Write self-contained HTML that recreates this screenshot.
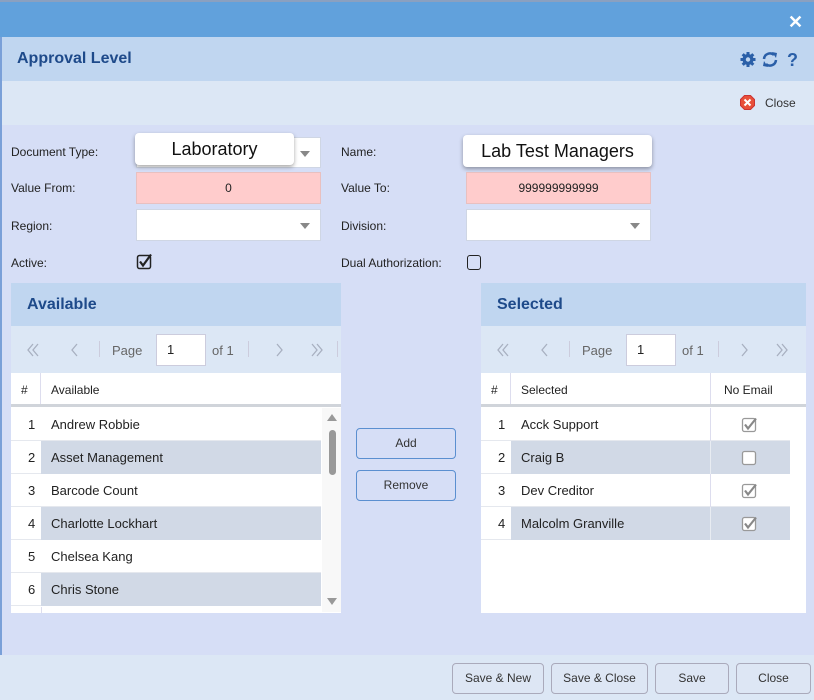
<!DOCTYPE html>
<html><head><style>
*{box-sizing:border-box;margin:0;padding:0}
body{width:814px;height:700px;position:relative;overflow:hidden;font-family:"Liberation Sans",sans-serif;font-size:13px;color:#222;background:#d6def6}
.a{position:absolute}
.lbl{position:absolute;font-size:12px;color:#222}
.inp{position:absolute;background:#fff;border:1px solid #cfd6e4}
.pink{background:#fcc;border:1px solid #e8c0c0;text-align:center;font-size:12px;line-height:30px;color:#222}
.tri{position:absolute;right:10px;top:13px;width:0;height:0;border-left:5px solid transparent;border-right:5px solid transparent;border-top:6px solid #888}
.ph{position:absolute;height:43px;background:#c0d6f0;color:#1e4a8a;font-weight:bold;font-size:16px;line-height:43px;padding-left:16px}
.pg{position:absolute;height:47px;background:#dce7f5;color:#999;font-size:13px}
.row{position:absolute;height:33px;border-bottom:1px solid #e5e8ee;font-size:13px;line-height:33px}
.btn{position:absolute;height:31px;border:1px solid #aab;border-radius:4px;background:#dde6f4;text-align:center;line-height:29px;font-size:12px;color:#333}
.bb{position:absolute;border:1px solid #5b8fd0;border-radius:4px;background:#d6def6;text-align:center;font-size:12px;line-height:29px;width:100px;height:31px;color:#333}
</style></head><body>
<div class="a" style="left:0;top:0;width:814px;height:2px;background:#8aa0c0"></div>
<div class="a" style="left:0;top:2px;width:814px;height:35px;background:#61a1dc"></div>
<div class="a" style="left:788px;top:12px;color:#fff;font-weight:bold;font-size:18px">✕</div>
<div class="a" style="left:0;top:37px;width:814px;height:44px;background:#c0d6f0"></div>
<div class="a" style="left:17px;top:50px;font-size:16px;font-weight:bold;color:#1e4a8a">Approval Level</div>
<svg class="a" style="left:740px;top:51px" width="60" height="17" viewBox="0 0 60 17">
<g fill="#2a5fa8"><circle cx="8" cy="8.5" r="5.5"/><rect x="6.5" y="1" width="3" height="15"/><rect x="0.5" y="7" width="15" height="3"/><rect x="6.5" y="1" width="3" height="15" transform="rotate(45 8 8.5)"/><rect x="6.5" y="1" width="3" height="15" transform="rotate(-45 8 8.5)"/></g>
<circle cx="8" cy="8.5" r="2.2" fill="#c0d6f0"/>
<path d="M24 8a6 6 0 0 1 10-4M36 9a6 6 0 0 1-10 4" stroke="#2a5fa8" stroke-width="2.5" fill="none"/>
<path d="M32 1l5 1-1 5zM28 16l-5-1 1-5z" fill="#2a5fa8"/>
<text x="47" y="15" font-family="Liberation Sans" font-weight="bold" font-size="18" fill="#2a5fa8">?</text>
</svg>
<div class="a" style="left:0;top:81px;width:814px;height:44px;background:#dce7f5"></div>
<svg class="a" style="left:740px;top:95px" width="15" height="15" viewBox="0 0 15 15"><path d="M4.5 0.5h6l4 4v6l-4 4h-6l-4-4v-6z" fill="#e8503a" stroke="#c33" stroke-width="1"/><path d="M4.5 4.5l6 6M10.5 4.5l-6 6" stroke="#fff" stroke-width="2"/></svg>
<div class="a" style="left:765px;top:96px;font-size:12px;color:#333">Close</div>
<div class="a" style="left:0;top:37px;width:2px;height:618px;background:#7aa0d8"></div>

<div class="lbl" style="left:11px;top:145px">Document Type:</div>
<div class="inp" style="left:136px;top:137px;width:185px;height:31px"><div class="tri"></div></div>
<div class="a" style="left:135px;top:133px;width:159px;height:32px;background:#fff;border-radius:4px;box-shadow:0 2px 4px rgba(0,0,0,.35);font-size:18px;text-align:center;line-height:32px;color:#111">Laboratory</div>
<div class="lbl" style="left:341px;top:145px">Name:</div>
<div class="a" style="left:463px;top:135px;width:189px;height:32px;background:#fff;border-radius:4px;box-shadow:0 2px 4px rgba(0,0,0,.35);font-size:18px;text-align:center;line-height:32px;color:#111">Lab Test Managers</div>
<div class="lbl" style="left:11px;top:181px">Value From:</div>
<div class="inp pink" style="left:136px;top:172px;width:185px;height:32px">0</div>
<div class="lbl" style="left:341px;top:181px">Value To:</div>
<div class="inp pink" style="left:466px;top:172px;width:185px;height:32px">999999999999</div>
<div class="lbl" style="left:11px;top:219px">Region:</div>
<div class="inp" style="left:136px;top:209px;width:185px;height:32px"><div class="tri"></div></div>
<div class="lbl" style="left:341px;top:219px">Division:</div>
<div class="inp" style="left:466px;top:209px;width:185px;height:32px"><div class="tri"></div></div>
<div class="lbl" style="left:11px;top:256px">Active:</div>
<svg class="a" style="left:136px;top:253px" width="18" height="18" viewBox="0 0 18 18"><rect x="1.5" y="2.5" width="13" height="13" rx="2" fill="none" stroke="#222" stroke-width="1.5"/><path d="M4 8.5l3 4 8-11" stroke="#222" stroke-width="2.2" fill="none"/></svg>
<div class="lbl" style="left:341px;top:256px">Dual Authorization:</div>
<div class="a" style="left:467px;top:255px;width:14px;height:15px;border:1.5px solid #222;border-radius:3px"></div>

<!-- Available -->
<div class="a" style="left:11px;top:283px;width:330px;height:330px;background:#fff"></div>
<div class="ph" style="left:11px;top:283px;width:330px">Available</div>
<div class="pg" style="left:11px;top:326px;width:330px">
<svg class="a" style="left:16px;top:17px" width="310" height="14" viewBox="0 0 310 14" fill="none" stroke="#a8b0c0" stroke-width="1.3">
<path d="M6 1l-5 6 5 6M11 1l-5 6 5 6M50 1l-5 6 5 6M250 1l5 6-5 6M285 1l5 6-5 6M290 1l5 6-5 6"/></svg>
<span class="a" style="left:88px;top:15px;width:1px;height:16px;background:#ccd"></span>
<span class="a" style="left:101px;top:17px;color:#666">Page</span>
<span class="a" style="left:145px;top:8px;width:50px;height:32px;background:#fff;border:1px solid #ccd;color:#222;padding-left:10px;line-height:30px">1</span>
<span class="a" style="left:201px;top:17px;color:#666">of 1</span>
<span class="a" style="left:237px;top:15px;width:1px;height:16px;background:#ccd"></span>
<span class="a" style="left:326px;top:15px;width:1px;height:16px;background:#ccd"></span>
</div>
<div class="a" style="left:11px;top:373px;width:330px;height:34px;background:#fff;border-bottom:3px solid #d0d4da;font-size:12px;line-height:34px">
<span class="a" style="left:10px">#</span><span class="a" style="left:29px;width:1px;height:31px;background:#dde"></span><span class="a" style="left:40px">Available</span></div>
<div class="a" style="left:322px;top:408px;width:19px;height:204px;background:#f8f8f8"></div>
<div class="a" style="left:329px;top:430px;width:7px;height:45px;border-radius:4px;background:#999"></div>
<div class="a" style="left:327px;top:414px;border-left:5px solid transparent;border-right:5px solid transparent;border-bottom:7px solid #999"></div>
<div class="a" style="left:327px;top:598px;border-left:5px solid transparent;border-right:5px solid transparent;border-top:7px solid #999"></div>

<div class="row" style="left:11px;top:408px;width:310px"><span class="a" style="left:17px">1</span><span class="a" style="left:40px">Andrew Robbie</span></div>
<div class="row" style="left:11px;top:441px;width:310px"><span class="a" style="left:17px">2</span><span class="a" style="left:30px;width:280px;height:33px;background:#d1d9e6;padding-left:10px">Asset Management</span></div>
<div class="row" style="left:11px;top:474px;width:310px"><span class="a" style="left:17px">3</span><span class="a" style="left:40px">Barcode Count</span></div>
<div class="row" style="left:11px;top:507px;width:310px"><span class="a" style="left:17px">4</span><span class="a" style="left:30px;width:280px;height:33px;background:#d1d9e6;padding-left:10px">Charlotte Lockhart</span></div>
<div class="row" style="left:11px;top:540px;width:310px"><span class="a" style="left:17px">5</span><span class="a" style="left:40px">Chelsea Kang</span></div>
<div class="row" style="left:11px;top:573px;width:310px"><span class="a" style="left:17px">6</span><span class="a" style="left:30px;width:280px;height:33px;background:#d1d9e6;padding-left:10px">Chris Stone</span></div>
<div class="a" style="left:41px;top:607px;width:1px;height:6px;background:#dde"></div>

<div class="bb" style="left:356px;top:428px">Add</div>
<div class="bb" style="left:356px;top:470px">Remove</div>

<!-- Selected -->
<div class="a" style="left:481px;top:283px;width:325px;height:330px;background:#fff"></div>
<div class="ph" style="left:481px;top:283px;width:325px">Selected</div>
<div class="pg" style="left:481px;top:326px;width:325px">
<svg class="a" style="left:16px;top:17px" width="310" height="14" viewBox="0 0 310 14" fill="none" stroke="#a8b0c0" stroke-width="1.3">
<path d="M6 1l-5 6 5 6M11 1l-5 6 5 6M50 1l-5 6 5 6M245 1l5 6-5 6M280 1l5 6-5 6M285 1l5 6-5 6"/></svg>
<span class="a" style="left:88px;top:15px;width:1px;height:16px;background:#ccd"></span>
<span class="a" style="left:101px;top:17px;color:#666">Page</span>
<span class="a" style="left:145px;top:8px;width:50px;height:32px;background:#fff;border:1px solid #ccd;color:#222;padding-left:10px;line-height:30px">1</span>
<span class="a" style="left:201px;top:17px;color:#666">of 1</span>
<span class="a" style="left:237px;top:15px;width:1px;height:16px;background:#ccd"></span>
</div>
<div class="a" style="left:481px;top:373px;width:325px;height:34px;background:#fff;border-bottom:3px solid #d0d4da;font-size:12px;line-height:34px">
<span class="a" style="left:10px">#</span><span class="a" style="left:29px;width:1px;height:31px;background:#dde"></span><span class="a" style="left:40px">Selected</span><span class="a" style="left:229px;width:1px;height:31px;background:#dde"></span><span class="a" style="left:243px">No Email</span></div>
<div class="row" style="left:481px;top:408px;width:309px"><span class="a" style="left:17px">1</span><span class="a" style="left:40px">Acck Support</span><span class="a" style="left:229px;width:1px;height:33px;background:#dde"></span></div>
<div class="row" style="left:481px;top:441px;width:309px"><span class="a" style="left:17px">2</span><span class="a" style="left:30px;width:279px;height:33px;background:#d1d9e6;padding-left:10px">Craig B</span><span class="a" style="left:229px;width:1px;height:33px;background:#e8ecf2"></span></div>
<div class="row" style="left:481px;top:474px;width:309px"><span class="a" style="left:17px">3</span><span class="a" style="left:40px">Dev Creditor</span><span class="a" style="left:229px;width:1px;height:33px;background:#dde"></span></div>
<div class="row" style="left:481px;top:507px;width:309px"><span class="a" style="left:17px">4</span><span class="a" style="left:30px;width:279px;height:33px;background:#d1d9e6;padding-left:10px">Malcolm Granville</span><span class="a" style="left:229px;width:1px;height:33px;background:#e8ecf2"></span></div>
<svg class="a" style="left:741px;top:416px" width="18" height="18" viewBox="0 0 18 18"><rect x="1.5" y="2.5" width="13" height="13" rx="2" fill="#fff" stroke="#999" stroke-width="1.3"/><path d="M4 8.5l3 4 8-10" stroke="#888" stroke-width="2.2" fill="none"/></svg>
<svg class="a" style="left:741px;top:449px" width="18" height="18" viewBox="0 0 18 18"><rect x="1.5" y="2.5" width="13" height="13" rx="2" fill="#fff" stroke="#999" stroke-width="1.3"/></svg>
<svg class="a" style="left:741px;top:482px" width="18" height="18" viewBox="0 0 18 18"><rect x="1.5" y="2.5" width="13" height="13" rx="2" fill="#fff" stroke="#999" stroke-width="1.3"/><path d="M4 8.5l3 4 8-10" stroke="#888" stroke-width="2.2" fill="none"/></svg>
<svg class="a" style="left:741px;top:515px" width="18" height="18" viewBox="0 0 18 18"><rect x="1.5" y="2.5" width="13" height="13" rx="2" fill="#fff" stroke="#999" stroke-width="1.3"/><path d="M4 8.5l3 4 8-10" stroke="#888" stroke-width="2.2" fill="none"/></svg>

<!-- Footer -->
<div class="a" style="left:0;top:655px;width:814px;height:45px;background:#dce7f5"></div>
<div class="btn" style="left:452px;top:663px;width:92px">Save &amp; New</div>
<div class="btn" style="left:551px;top:663px;width:97px">Save &amp; Close</div>
<div class="btn" style="left:655px;top:663px;width:74px">Save</div>
<div class="btn" style="left:736px;top:663px;width:75px">Close</div>
</body></html>
